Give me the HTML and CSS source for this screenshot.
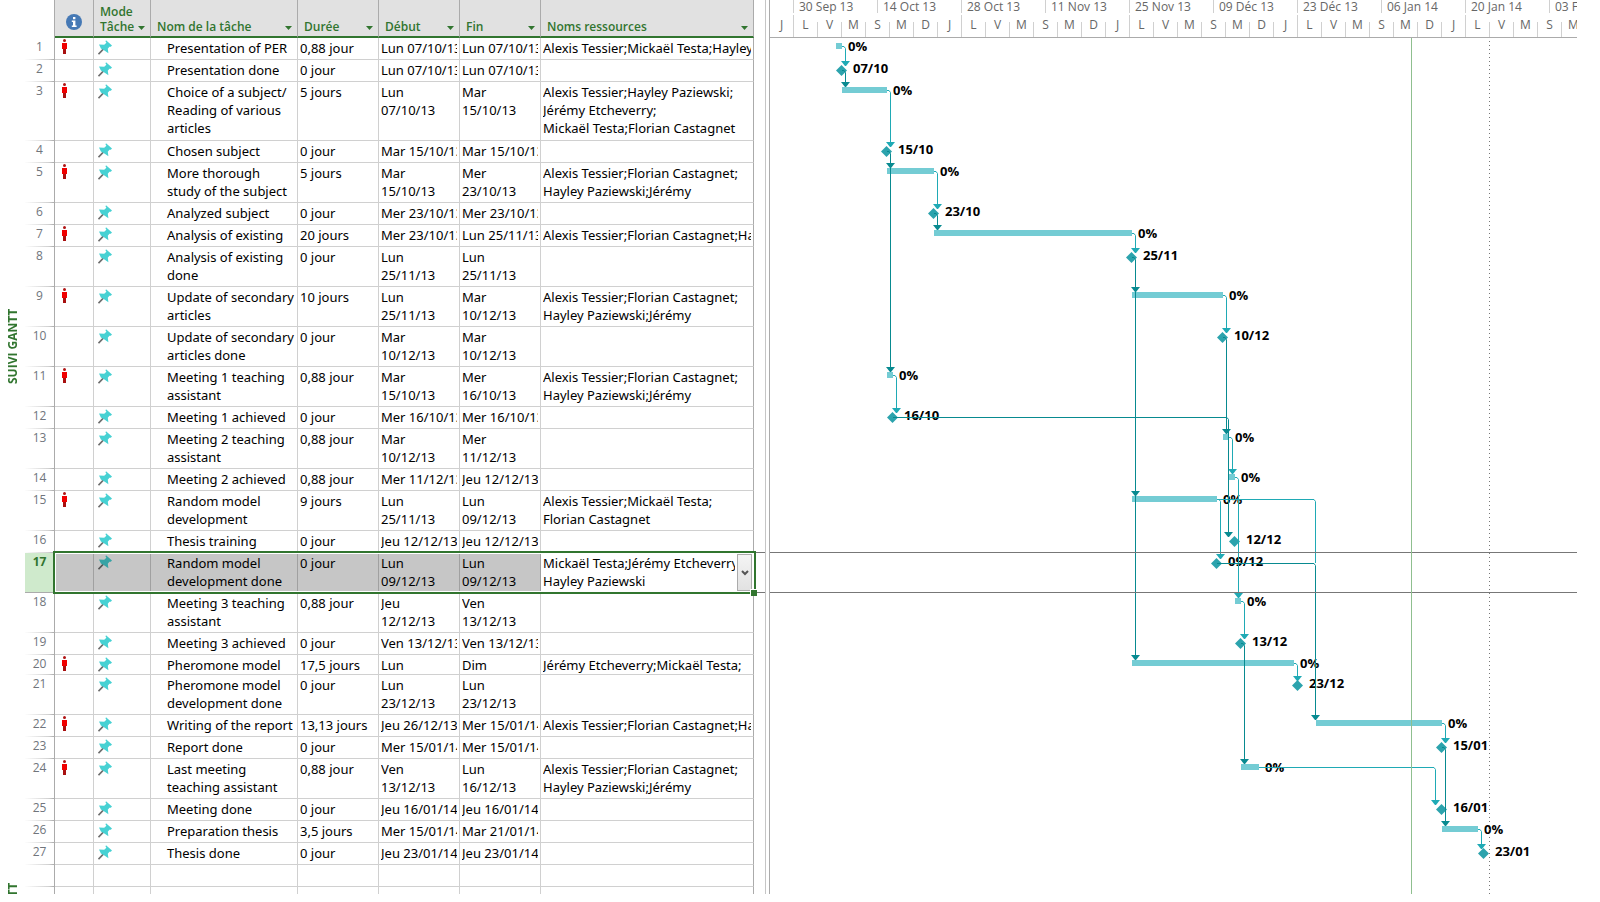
FILE: index.html
```html
<!DOCTYPE html>
<html lang="fr">
<head>
<meta charset="utf-8">
<title>Suivi Gantt</title>
<link rel="stylesheet" href="styles.css">
</head>
<body>
<svg class="defs" aria-hidden="true">
  <symbol id="pin" viewBox="0 0 14 15">
    <path d="M.5 14.2 5.8 8.6" stroke="#6d6d6d" stroke-width="1.6" fill="none"/>
    <path d="M8 .2 14 5.6 12.8 6.8 11.4 6.8 9.8 8.8 10.4 13.2 6.4 10.6 2.9 8.4 1 4.4 6.2 4.8 8.4 2.8 7.5 1.4Z" fill="#47d1d3"/>
  </symbol>
  <symbol id="person" viewBox="0 0 5 15">
    <circle cx="2.5" cy="1.5" r="1.5" fill="#b01414"/>
    <path d="M0 4h5v6H0z" fill="#f00000"/>
    <path d="M1 10h3v5H1z" fill="#a81010"/>
  </symbol>
</svg>
<div class="app">
  <aside class="views">
    <span class="view-name">SUIVI GANTT</span>
    <span class="view-name">SUIVI GANTT</span>
  </aside>

  <main class="sheet">
    <table class="tasks">
      <colgroup>
        <col class="c-num"><col class="c-info"><col class="c-mode"><col class="c-name">
        <col class="c-date"><col class="c-date"><col class="c-date"><col class="c-res">
      </colgroup>
      <thead>
        <tr>
          <td class="corner"></td>
          <th><svg class="info" viewBox="0 0 16 16" role="img" aria-label="Indicateurs"><circle cx="8" cy="8" r="8" fill="#4679b5"/><path d="M7 3h2.4v2.2H7zM5.8 6.4h3.6v5h1.2v1.6H5.8v-1.6H7V8H5.8z" fill="#fff"/></svg></th>
          <th><div class="head"><span>Mode<br>Tâche</span><button class="filter" aria-label="Filtrer Mode Tâche"></button></div></th>
          <th><div class="head"><span>Nom de la tâche</span><button class="filter" aria-label="Filtrer Nom de la tâche"></button></div></th>
          <th><div class="head"><span>Durée</span><button class="filter" aria-label="Filtrer Durée"></button></div></th>
          <th><div class="head"><span>Début</span><button class="filter" aria-label="Filtrer Début"></button></div></th>
          <th><div class="head"><span>Fin</span><button class="filter" aria-label="Filtrer Fin"></button></div></th>
          <th><div class="head"><span>Noms ressources</span><button class="filter" aria-label="Filtrer Noms ressources"></button></div></th>
        </tr>
      </thead>
      <tbody>
        <tr><th>1</th><td class="ind"><svg class="person"><use href="#person"/></svg></td><td class="mode"><svg class="pin"><use href="#pin"/></svg></td><td class="name">Presentation of PER</td><td>0,88 jour</td><td><div>Lun 07/10/13</div></td><td><div>Lun 07/10/13</div></td><td><div>Alexis Tessier;Mickaël Testa;Hayley</div></td></tr>
        <tr><th>2</th><td class="ind"></td><td class="mode"><svg class="pin"><use href="#pin"/></svg></td><td class="name">Presentation done</td><td>0 jour</td><td><div>Lun 07/10/13</div></td><td><div>Lun 07/10/13</div></td><td></td></tr>
        <tr class="tall"><th>3</th><td class="ind"><svg class="person"><use href="#person"/></svg></td><td class="mode"><svg class="pin"><use href="#pin"/></svg></td><td class="name">Choice of a subject/<br>Reading of various<br>articles</td><td>5 jours</td><td><div>Lun<br>07/10/13</div></td><td><div>Mar<br>15/10/13</div></td><td><div>Alexis Tessier;Hayley Paziewski;<br>Jérémy Etcheverry;<br>Mickaël Testa;Florian Castagnet</div></td></tr>
        <tr><th>4</th><td class="ind"></td><td class="mode"><svg class="pin"><use href="#pin"/></svg></td><td class="name">Chosen subject</td><td>0 jour</td><td><div>Mar 15/10/13</div></td><td><div>Mar 15/10/13</div></td><td></td></tr>
        <tr><th>5</th><td class="ind"><svg class="person"><use href="#person"/></svg></td><td class="mode"><svg class="pin"><use href="#pin"/></svg></td><td class="name">More thorough<br>study of the subject</td><td>5 jours</td><td><div>Mar<br>15/10/13</div></td><td><div>Mer<br>23/10/13</div></td><td><div>Alexis Tessier;Florian Castagnet;<br>Hayley Paziewski;Jérémy</div></td></tr>
        <tr><th>6</th><td class="ind"></td><td class="mode"><svg class="pin"><use href="#pin"/></svg></td><td class="name">Analyzed subject</td><td>0 jour</td><td><div>Mer 23/10/13</div></td><td><div>Mer 23/10/13</div></td><td></td></tr>
        <tr><th>7</th><td class="ind"><svg class="person"><use href="#person"/></svg></td><td class="mode"><svg class="pin"><use href="#pin"/></svg></td><td class="name">Analysis of existing</td><td>20 jours</td><td><div>Mer 23/10/13</div></td><td><div>Lun 25/11/13</div></td><td><div>Alexis Tessier;Florian Castagnet;Hayley</div></td></tr>
        <tr><th>8</th><td class="ind"></td><td class="mode"><svg class="pin"><use href="#pin"/></svg></td><td class="name">Analysis of existing<br>done</td><td>0 jour</td><td><div>Lun<br>25/11/13</div></td><td><div>Lun<br>25/11/13</div></td><td></td></tr>
        <tr><th>9</th><td class="ind"><svg class="person"><use href="#person"/></svg></td><td class="mode"><svg class="pin"><use href="#pin"/></svg></td><td class="name">Update of secondary<br>articles</td><td>10 jours</td><td><div>Lun<br>25/11/13</div></td><td><div>Mar<br>10/12/13</div></td><td><div>Alexis Tessier;Florian Castagnet;<br>Hayley Paziewski;Jérémy</div></td></tr>
        <tr><th>10</th><td class="ind"></td><td class="mode"><svg class="pin"><use href="#pin"/></svg></td><td class="name">Update of secondary<br>articles done</td><td>0 jour</td><td><div>Mar<br>10/12/13</div></td><td><div>Mar<br>10/12/13</div></td><td></td></tr>
        <tr><th>11</th><td class="ind"><svg class="person"><use href="#person"/></svg></td><td class="mode"><svg class="pin"><use href="#pin"/></svg></td><td class="name">Meeting 1 teaching<br>assistant</td><td>0,88 jour</td><td><div>Mar<br>15/10/13</div></td><td><div>Mer<br>16/10/13</div></td><td><div>Alexis Tessier;Florian Castagnet;<br>Hayley Paziewski;Jérémy</div></td></tr>
        <tr><th>12</th><td class="ind"></td><td class="mode"><svg class="pin"><use href="#pin"/></svg></td><td class="name">Meeting 1 achieved</td><td>0 jour</td><td><div>Mer 16/10/13</div></td><td><div>Mer 16/10/13</div></td><td></td></tr>
        <tr><th>13</th><td class="ind"></td><td class="mode"><svg class="pin"><use href="#pin"/></svg></td><td class="name">Meeting 2 teaching<br>assistant</td><td>0,88 jour</td><td><div>Mar<br>10/12/13</div></td><td><div>Mer<br>11/12/13</div></td><td></td></tr>
        <tr><th>14</th><td class="ind"></td><td class="mode"><svg class="pin"><use href="#pin"/></svg></td><td class="name">Meeting 2 achieved</td><td>0,88 jour</td><td><div>Mer 11/12/13</div></td><td><div>Jeu 12/12/13</div></td><td></td></tr>
        <tr><th>15</th><td class="ind"><svg class="person"><use href="#person"/></svg></td><td class="mode"><svg class="pin"><use href="#pin"/></svg></td><td class="name">Random model<br>development</td><td>9 jours</td><td><div>Lun<br>25/11/13</div></td><td><div>Lun<br>09/12/13</div></td><td><div>Alexis Tessier;Mickaël Testa;<br>Florian Castagnet</div></td></tr>
        <tr><th>16</th><td class="ind"></td><td class="mode"><svg class="pin"><use href="#pin"/></svg></td><td class="name">Thesis training</td><td>0 jour</td><td><div>Jeu 12/12/13</div></td><td><div>Jeu 12/12/13</div></td><td></td></tr>
        <tr class="selected"><th>17</th><td class="ind"></td><td class="mode"><svg class="pin"><use href="#pin"/></svg></td><td class="name">Random model<br>development done</td><td>0 jour</td><td><div>Lun<br>09/12/13</div></td><td><div>Lun<br>09/12/13</div></td><td class="editing"><div>Mickaël Testa;Jérémy Etcheverry;<br>Hayley Paziewski</div><button class="drop" aria-label="Choisir les ressources"><svg viewBox="0 0 8 6"><path d="M1 1l3 3 3-3" fill="none" stroke="#555" stroke-width="2"/></svg></button><span class="gutter-rules"></span></td></tr>
        <tr><th>18</th><td class="ind"></td><td class="mode"><svg class="pin"><use href="#pin"/></svg></td><td class="name">Meeting 3 teaching<br>assistant</td><td>0,88 jour</td><td><div>Jeu<br>12/12/13</div></td><td><div>Ven<br>13/12/13</div></td><td></td></tr>
        <tr><th>19</th><td class="ind"></td><td class="mode"><svg class="pin"><use href="#pin"/></svg></td><td class="name">Meeting 3 achieved</td><td>0 jour</td><td><div>Ven 13/12/13</div></td><td><div>Ven 13/12/13</div></td><td></td></tr>
        <tr class="compact"><th>20</th><td class="ind"><svg class="person"><use href="#person"/></svg></td><td class="mode"><svg class="pin"><use href="#pin"/></svg></td><td class="name">Pheromone model</td><td>17,5 jours</td><td><div>Lun</div></td><td><div>Dim</div></td><td><div>Jérémy Etcheverry;Mickaël Testa;</div></td></tr>
        <tr><th>21</th><td class="ind"></td><td class="mode"><svg class="pin"><use href="#pin"/></svg></td><td class="name">Pheromone model<br>development done</td><td>0 jour</td><td><div>Lun<br>23/12/13</div></td><td><div>Lun<br>23/12/13</div></td><td></td></tr>
        <tr><th>22</th><td class="ind"><svg class="person"><use href="#person"/></svg></td><td class="mode"><svg class="pin"><use href="#pin"/></svg></td><td class="name">Writing of the report</td><td>13,13 jours</td><td><div>Jeu 26/12/13</div></td><td><div>Mer 15/01/14</div></td><td><div>Alexis Tessier;Florian Castagnet;Hayley</div></td></tr>
        <tr><th>23</th><td class="ind"></td><td class="mode"><svg class="pin"><use href="#pin"/></svg></td><td class="name">Report done</td><td>0 jour</td><td><div>Mer 15/01/14</div></td><td><div>Mer 15/01/14</div></td><td></td></tr>
        <tr><th>24</th><td class="ind"><svg class="person"><use href="#person"/></svg></td><td class="mode"><svg class="pin"><use href="#pin"/></svg></td><td class="name">Last meeting<br>teaching assistant</td><td>0,88 jour</td><td><div>Ven<br>13/12/13</div></td><td><div>Lun<br>16/12/13</div></td><td><div>Alexis Tessier;Florian Castagnet;<br>Hayley Paziewski;Jérémy</div></td></tr>
        <tr><th>25</th><td class="ind"></td><td class="mode"><svg class="pin"><use href="#pin"/></svg></td><td class="name">Meeting done</td><td>0 jour</td><td><div>Jeu 16/01/14</div></td><td><div>Jeu 16/01/14</div></td><td></td></tr>
        <tr><th>26</th><td class="ind"></td><td class="mode"><svg class="pin"><use href="#pin"/></svg></td><td class="name">Preparation thesis</td><td>3,5 jours</td><td><div>Mer 15/01/14</div></td><td><div>Mar 21/01/14</div></td><td></td></tr>
        <tr><th>27</th><td class="ind"></td><td class="mode"><svg class="pin"><use href="#pin"/></svg></td><td class="name">Thesis done</td><td>0 jour</td><td><div>Jeu 23/01/14</div></td><td><div>Jeu 23/01/14</div></td><td></td></tr>
        <tr><th></th><td></td><td></td><td></td><td></td><td></td><td></td><td></td></tr>
        <tr><th></th><td></td><td></td><td></td><td></td><td></td><td></td><td></td></tr>
      </tbody>
    </table>
  </main>

  <div class="splitter"></div>

  <section class="gantt">
    <header class="timeline">
      <div class="weeks">
        <span>30 Sep 13</span><span>14 Oct 13</span><span>28 Oct 13</span><span>11 Nov 13</span><span>25 Nov 13</span><span>09 Déc 13</span><span>23 Déc 13</span><span>06 Jan 14</span><span>20 Jan 14</span><span>03 Fév 14</span>
      </div>
      <div class="days">
        <span>J</span><span class="full">L</span><span>V</span><span>M</span><span>S</span><span>M</span><span>D</span><span>J</span><span class="full">L</span><span>V</span><span>M</span><span>S</span><span>M</span><span>D</span><span>J</span><span class="full">L</span><span>V</span><span>M</span><span>S</span><span>M</span><span>D</span><span>J</span><span class="full">L</span><span>V</span><span>M</span><span>S</span><span>M</span><span>D</span><span>J</span><span class="full">L</span><span>V</span><span>M</span><span>S</span><span>M</span>
      </div>
    </header>
    <svg class="chart" viewBox="770 38 830 856" width="830" height="856" role="img" aria-label="Diagramme de Gantt">
      <defs>
        <path id="tip" d="M-4.5-5h9L.5 0h-1z"/>
        <path id="ms" d="M0-5.5 5.5 0 0 5.5-5.5 0z"/>
      </defs>
      <g class="bars">
        <rect x="836" y="43" width="6" height="6"/>
        <rect x="842" y="87" width="45" height="6"/>
        <rect x="887" y="168" width="47" height="6"/>
        <rect x="934" y="230" width="198" height="6"/>
        <rect x="1132" y="292" width="91" height="6"/>
        <rect x="887" y="372" width="6" height="6"/>
        <rect x="1223" y="434" width="6" height="6"/>
        <rect x="1229" y="474" width="6" height="6"/>
        <rect x="1132" y="496" width="85" height="6"/>
        <rect x="1235" y="598" width="6" height="6"/>
        <rect x="1132" y="660" width="162" height="6"/>
        <rect x="1316" y="720" width="126" height="6"/>
        <rect x="1241" y="764" width="18" height="6"/>
        <rect x="1442" y="826" width="36" height="6"/>
      </g>
      <g class="milestones">
        <use href="#ms" x="841.5" y="70.5"/><use href="#ms" x="886.5" y="151.5"/>
        <use href="#ms" x="933.5" y="213.5"/><use href="#ms" x="1131.5" y="257.5"/>
        <use href="#ms" x="1222.5" y="337.5"/><use href="#ms" x="892.5" y="417.5"/>
        <use href="#ms" x="1234.5" y="541.5"/><use href="#ms" x="1216.5" y="563.5"/>
        <use href="#ms" x="1240.5" y="643.5"/><use href="#ms" x="1297.5" y="685.5"/>
        <use href="#ms" x="1441.5" y="747.5"/><use href="#ms" x="1441.5" y="809.5"/>
        <use href="#ms" x="1483.5" y="853.5"/>
      </g>
      <g class="labels">
        <text x="848" y="51">0%</text><text x="853" y="73">07/10</text>
        <text x="893" y="95">0%</text><text x="898" y="154">15/10</text>
        <text x="940" y="176">0%</text><text x="945" y="216">23/10</text>
        <text x="1138" y="238">0%</text><text x="1143" y="260">25/11</text>
        <text x="1229" y="300">0%</text><text x="1234" y="340">10/12</text>
        <text x="899" y="380">0%</text><text x="904" y="420">16/10</text>
        <text x="1235" y="442">0%</text><text x="1241" y="482">0%</text>
        <text x="1223" y="504">0%</text><text x="1246" y="544">12/12</text>
        <text x="1228" y="566">09/12</text><text x="1247" y="606">0%</text>
        <text x="1252" y="646">13/12</text><text x="1300" y="668">0%</text>
        <text x="1309" y="688">23/12</text><text x="1448" y="728">0%</text>
        <text x="1453" y="750">15/01</text><text x="1265" y="772">0%</text>
        <text x="1453" y="812">16/01</text><text x="1484" y="834">0%</text>
        <text x="1495" y="856">23/01</text>
      </g>
      <g class="links">
        <path d="M842 46.5h2l1.5 2V62M887 90.5h2l1.5 2V143M934 171.5h2l1.5 2V205M1132 233.5h2l1.5 2V249M1223 295.5h2l1.5 2V329M893 375.5h2l1.5 2V409M1229 437.5h2l1.5 2V470M1235 477.5h2l1.5 2V594M1217 499.5h2l1.5 2V555M1217 499.5h97l1.5 2V563M1241 601.5h2l1.5 2V635M1294 663.5h2l1.5 2V677M1442 723.5h2l1.5 2V739M1259 767.5h175l1.5 2V801M1478 829.5h2l1.5 2V845"/>
        <g class="tips">
          <use href="#tip" x="845.5" y="66"/><use href="#tip" x="890.5" y="147"/><use href="#tip" x="937.5" y="209"/>
          <use href="#tip" x="1135.5" y="253"/><use href="#tip" x="1226.5" y="333"/><use href="#tip" x="896.5" y="413"/>
          <use href="#tip" x="1232.5" y="474"/><use href="#tip" x="1238.5" y="598"/><use href="#tip" x="1220.5" y="559"/>
          <use href="#tip" x="1244.5" y="639"/><use href="#tip" x="1297.5" y="681"/><use href="#tip" x="1445.5" y="743"/>
          <use href="#tip" x="1435.5" y="805"/><use href="#tip" x="1481.5" y="849"/>
        </g>
      </g>
      <g class="links dark">
        <path d="M842 70.5h2l1.5 2V83M887 151.5h2l1.5 2V368M934 213.5h2l1.5 2V226M1132 257.5h2l1.5 2V656M1223 337.5h2l1.5 2V430M893 417.5h334l1.5 2V533M1217 563.5h97l1.5 2V716M1241 643.5h2l1.5 2V760M1442 747.5h2l1.5 2V822"/>
        <g class="tips">
          <use href="#tip" x="845.5" y="87"/><use href="#tip" x="890.5" y="168"/><use href="#tip" x="890.5" y="372"/>
          <use href="#tip" x="937.5" y="230"/><use href="#tip" x="1135.5" y="292"/><use href="#tip" x="1135.5" y="496"/>
          <use href="#tip" x="1135.5" y="660"/><use href="#tip" x="1226.5" y="434"/><use href="#tip" x="1228.5" y="537"/>
          <use href="#tip" x="1315.5" y="720"/><use href="#tip" x="1244.5" y="764"/><use href="#tip" x="1445.5" y="826"/>
        </g>
      </g>
      <path class="row-rule" d="M770 552.5h830M770 592.5h830"/>
      <path class="status-line" d="M1411.5 38v856"/>
      <path class="today-line" d="M1489.5 41v853"/>
    </svg>
  </section>
</div>
</body>
</html>
```
FILE: styles.css
```css
* { box-sizing: border-box; }

body {
  margin: 0;
  background: #fff;
  color: #000;
  font: 13px/18px "Noto Sans", "Open Sans", sans-serif;
}

.defs { position: absolute; width: 0; height: 0; }

.app {
  display: flex;
  height: calc(100vh - 8px);
  margin-right: 23px;
  overflow: hidden;
}

/* vertical view names */
.views {
  flex: none;
  display: flex;
  flex-direction: column;
  align-items: center;
  gap: 496px;
  width: 25px;
  padding-top: 306px;
}
.view-name {
  flex: none;
  height: 78px;
  writing-mode: vertical-rl;
  transform: rotate(180deg);
  color: #31752f;
  font: bold 12px/18px "Open Sans", sans-serif;
  white-space: nowrap;
}

/* task sheet */
.sheet { flex: none; width: 740px; overflow: hidden; }

.tasks {
  width: 729px;
  table-layout: fixed;
  border-collapse: separate;
  border-spacing: 0;
}
.c-num { width: 30px; }
.c-info { width: 39px; }
.c-mode { width: 57px; }
.c-name { width: 147px; }
.c-date { width: 81px; }
.c-res { width: 213px; }

.tasks thead th {
  height: 38px;
  padding: 0 0 2px;
  background: #e1e1e1;
  border-right: 1px solid #ababab;
  border-bottom: 2px solid #31752f;
  vertical-align: bottom;
  text-align: left;
}
.corner { padding: 0; border-right: 1px solid #ababab; }
.info { display: block; width: 16px; height: 16px; margin: 0 0 4px 11px; }
.head {
  display: flex;
  align-items: flex-end;
  justify-content: space-between;
  padding: 0 5px 0 6px;
  color: #31752f;
  font: 600 12px/15px "Open Sans", sans-serif;
  white-space: nowrap;
}
.filter {
  width: 7px;
  height: 4px;
  margin-bottom: 4px;
  padding: 0;
  border: 0;
  background: #31752f;
  clip-path: polygon(0 0, 100% 0, 50% 100%);
}

.tasks tbody th {
  padding: 0;
  border-right: 1px solid #ababab;
  border-bottom: 1px solid;
  border-image: linear-gradient(to right, #fff, #d0d0d0 80%, #ababab 97%) 1;
  color: #70757c;
  font: 12px/18px "Open Sans", sans-serif;
  text-align: center;
  vertical-align: top;
}
.tasks tbody td {
  height: 22px;
  padding: 1px 2px 2px;
  border-right: 1px solid #d0d0d0;
  border-bottom: 1px solid #d0d0d0;
  vertical-align: top;
  white-space: nowrap;
}
.tasks tbody td:last-child { border-right-color: #ababab; }
.tasks td > div { overflow: hidden; }
.tasks tbody .name { padding-left: 16px; }
.tasks .tall td { height: 59px; }
.tasks .compact td { height: 20px; padding-bottom: 0; }
.tasks tbody .ind { padding: 1px 0 0 7px; }
.tasks tbody .mode { padding: 2px 0 0 4px; }
.person, .pin { display: block; height: 15px; }
.person { width: 5px; }
.pin { width: 14px; }

/* selected row: the outline, fill handle and drop button are placed on the row */
.selected { position: relative; }
.editing::before {
  content: "";
  position: absolute;
  inset: -2px -2px -1px 28px;
  border: 2px solid #31752f;
  box-shadow: inset 0 0 0 1px #fff;
  z-index: 1;
  pointer-events: none;
}
.editing::after {
  content: "";
  position: absolute;
  right: -3px;
  bottom: -3px;
  width: 6px;
  height: 6px;
  border: solid #fff;
  border-width: 1px 0 0 1px;
  background: #31752f;
  z-index: 2;
}
.gutter-rules {
  position: absolute;
  top: -1px;
  bottom: 0;
  left: 100%;
  width: 11px;
  border: solid #777;
  border-width: 1px 0;
}
.tasks .selected th {
  border-image: none;
  border-color: #ababab;
  background: #cfeacc;
  color: #31752f;
  font-weight: bold;
}
.tasks .selected td {
  background: #c6c6c6;
  border-color: #a0a0a0;
}
.selected .pin { filter: brightness(0.78); }
.tasks .selected .editing { padding-right: 18px; background: #fff; }
.drop {
  position: absolute;
  top: 1px;
  right: 2px;
  bottom: 2px;
  width: 15px;
  padding: 0;
  border: 1px solid #ababab;
  background: linear-gradient(#f4f4f4, #e2e2e2);
}
.drop svg { display: block; width: 8px; height: 6px; margin: 0 auto; }

.splitter {
  flex: none;
  width: 5px;
  border: solid #ababab;
  border-width: 0 1px;
  border-left-color: #c6c6c6;
}

/* chart pane */
.gantt { flex: 1; min-width: 0; overflow: hidden; }
.timeline {
  height: 38px;
  overflow: hidden;
  border-bottom: 1px solid #ababab;
  color: #666;
  font: 12px/16px "Open Sans", sans-serif;
  white-space: nowrap;
}
.weeks { display: flex; height: 15px; padding-left: 23px; }
.weeks span {
  flex: 0 0 84px;
  height: 13px;
  padding-left: 5px;
  border-left: 1px solid #d0d0d0;
  line-height: 14px;
}
.days { display: flex; align-items: flex-end; height: 22px; }
.days span {
  flex: 0 0 24px;
  height: 15px;
  border-left: 1px solid #d0d0d0;
  line-height: 5px;
  text-align: center;
}
.days span:first-child { flex-basis: 23px; border-left: 0; }
.days .full { height: 22px; line-height: 19px; }

.chart { display: block; }
.bars { fill: #74ccd4; }
.milestones { fill: #2ca3ad; }
.labels { font: bold 13px "Open Sans", sans-serif; fill: #000; }
.links path { fill: none; stroke: #1faab5; }
.links .tips { fill: #1faab5; }
.dark path { stroke: #088a90; }
.dark .tips { fill: #088a90; }
.row-rule { stroke: #777; fill: none; }
.status-line { stroke: #8fbf8f; }
.today-line { stroke: #777; stroke-dasharray: 1 3; }
```
